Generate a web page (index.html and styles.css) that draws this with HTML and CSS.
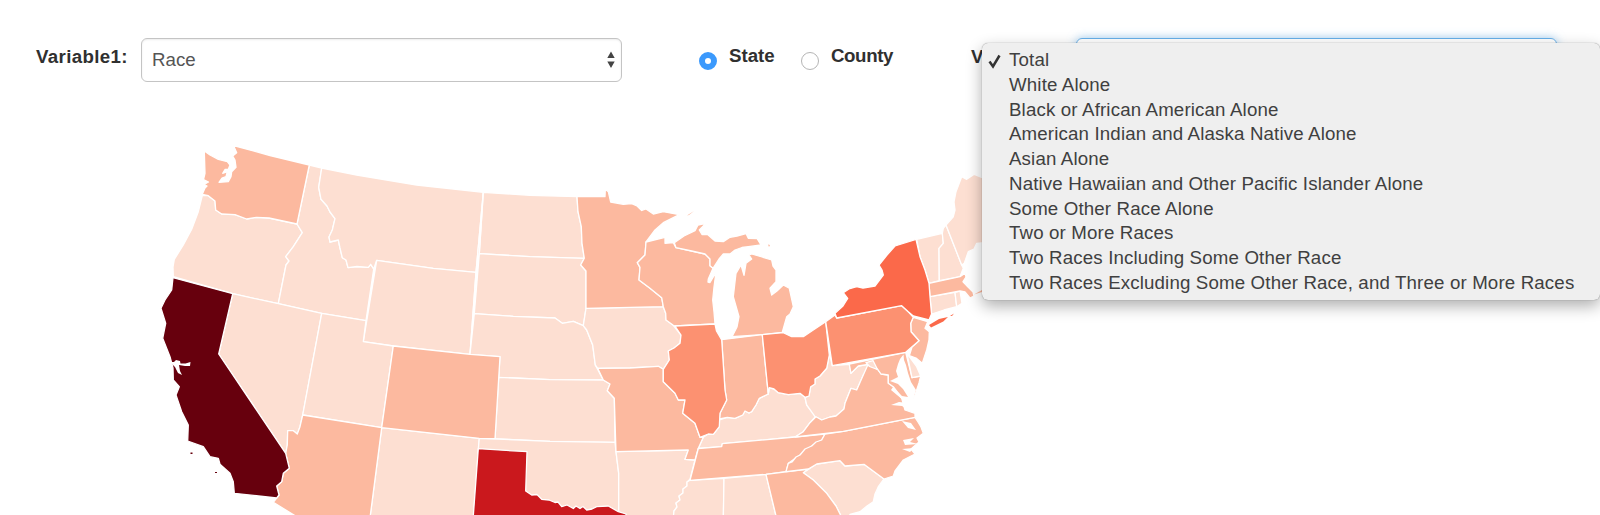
FILE: index.html
```html
<!DOCTYPE html>
<html lang="en">
<head>
<meta charset="utf-8">
<title>Census map</title>
<link rel="stylesheet" href="styles.css">
</head>
<body>
<form class="controls">
  <div class="field first">
    <span class="label">Variable1:</span>
    <div class="select"><span>Race</span>
      <svg class="arrows" width="8" height="18" viewBox="0 0 8 18"><path d="M.3 7L4 .5 7.700 7zM.3 10.500h7.400L4 17z"/></svg>
    </div>
  </div>
  <div class="radios">
    <span class="radio on"></span><span class="label state">State</span>
    <span class="radio"></span><span class="label county">County</span>
  </div>
  <div class="field second">
    <span class="label">V</span>
    <div class="select focus"></div>
  </div>
</form>
<svg class="map" width="1600" height="415" viewBox="0 100 1600 415">
  <g class="c1">
    <path d="M202.300 195.500L208.300 195.700 215 201 215.700 210 221.700 214 235 214.700 246.700 219 256.700 217.300 269 218 297 224 302.300 232.700 293.300 246.700 285.700 256.700 289 261 286 265 278.300 303.700 232.700 293.700 173.300 276.700 173 267 174.300 259.300 183.300 245 191.700 229.300 198.300 211.700z"/>
    <path d="M309.300 165L321.700 168 318.700 187.300 321 199.300 327 206 330 212 335 218.700 332.300 230 329 237 330 242 338.300 240 340 248 342.300 257.700 346 260 348 267.700 357 266.500 368.300 267.300 370.700 264.300 373.700 269 366 320.700 321.700 313.300 278.300 303.700 286 265 289 261 285.700 256.700 293.300 246.700 302.300 232.700 297 224z"/>
    <path d="M321.700 168L356.700 175 416.700 185 483.300 192.300 476 272.300 433.300 268.300 376.700 260.300 373.700 269 370.700 264.300 368.300 267.300 357 266.500 348 267.700 346 260 342.300 257.700 340 248 338.300 240 330 242 329 237 332.300 230 335 218.700 330 212 327 206 321 199.300 318.700 187.300z"/>
    <path d="M376.700 260.300L433.300 268.300 476 272.300 470 354.300 393.300 346 363.300 341.700z"/>
    <path d="M232.700 293.700L278.300 303.700 321.700 313.300 302.700 415 300 426.700 297.300 434 293.300 430.700 287.700 430.700 287.300 445 285.700 453.300 218.700 354z"/>
    <path d="M321.700 313.300L366 320.700 363.300 341.700 393.300 346 381.700 427.700 302.700 415z"/>
    <path d="M381.700 427.700L479.300 438.300 473.300 520 369.700 520z"/>
    <path d="M483.300 192.300L530 195.300 577 196.700 578 211.700 581.300 226.700 582 243.300 584.300 258.300 530 256.700 479.300 253.700z"/>
    <path d="M483.300 192.300L479.300 253.700 476 272.300 474.300 313.700 470 354.300 476 272.300z"/>
    <path d="M479.300 253.700L530 256.700 584.300 258.300 580.700 265 586 271 586 308.300 583.300 325.700 573.300 321.300 562.300 323.300 555 318 513.300 316.300 474.300 313.700z"/>
    <path d="M474.300 313.700L513.300 316.300 555 318 562.300 323.300 573.300 321.300 583.300 325.700 586.700 330 592.700 345 595.300 365 603.300 380 550 379.700 498.700 377.300 500 356.700 470 354.300z"/>
    <path d="M498.700 377.300L550 379.700 603.300 380 610 384 607.300 390.700 614.300 398.300 615 442.300 550 441.300 495 438.700z"/>
    <path d="M479.300 438.300L550 441.300 615 442.300 616 451.700 618.700 473.300 618.700 520 478 520 478.300 448.700z"/>
    <path d="M616 451.700L688.300 450 685 459.300 695 460 690 479.300 687 482 687 486 683 489 683 493 679 496 680 500 676 503 677 507 674 511 673 520 618.700 520 618.700 473.300z"/>
    <path d="M586 308.300L663.300 306.700 665.700 313.300 666 320 673.300 325.300 681 335 680 343.300 674 348 668.300 351 669.300 360 663.300 369.300 658.300 366.300 630 368 597.700 368.300 595.300 365 592.700 345 586.700 330 583.300 325.700z"/>
    <path d="M690 480.300L724 478.300 723.300 520 673 520 674 511 677 507 676 503 680 500 679 496 683 493 683 489 687 486 687 482z"/>
    <path d="M724 478.300L766 474.300 777 520 723.300 520z"/>
    <path d="M703.300 437.300L708.300 434 713.300 434.300 719.300 426.700 719.300 420 727.300 417.300 735 418.300 742.700 415 745 411 749 413 751.700 411.700 756 405 759.300 398.300 768.300 394 769.300 387.700 774 389 778.300 392.700 788.300 394.700 800 393.300 805 397.300 806.700 405 816 416 810 422.700 803.300 431.700 795 437 722.300 443.700 721.700 446.700 698.300 448.500z"/>
    <path d="M828.300 348L832.300 365.700 849.300 364.300 851 373.300 858.300 366 868.300 364.300 868.300 370 863.300 375 856.700 390 851 388.300 845 403.300 844 409 836 416 830 417 821.700 420 815 416.700 806.700 405 805 397.300 809 396 810.700 386.700 815 384 815 379 820 376 826.700 368.300 829.300 355z"/>
    <path d="M803.300 472.700L816.700 464 840 460.700 845 466 864 464.300 884 479 878.300 486.700 875 494 873.300 501.700 867 506 860 511.700 850 514.500 847 520 843 520 836 506 826.700 493.300 813.300 480z"/>
    <path d="M916.700 239.300L942.300 233.300 943.300 243.300 939 248.300 939.300 280.700 929 283.300 925 270 920 256.700z"/>
    <path d="M943.300 228.300L946 225 961.700 265 963.300 268.300 960 276.700 939.300 280.700 939 248.300 943.300 243.300 942.300 233.300z"/>
    <path d="M946 225L953.300 216.700 955 210 954 202 956 191.700 961.700 176.700 966.700 179.300 974.300 174.300 981.700 177.300 990 182 990 238 981.700 243 976.700 243.300 974 249 968.300 251.700 964.300 263.300 961.700 265z"/>
    <path d="M930 296.700L955 292.300 956.700 306.700 944 310 931.700 314z"/>
    <path d="M955 292.300L960 291 962 303.300 956.700 306.700z"/>
  </g>
  <g class="c2">
    <path d="M204.300 151L210 155 218.300 159.300 227.300 161.700 230 165 228.300 169.300 225 169.500 222.700 173.300 227.300 171.700 226 176.700 222 178 219 182.300 228.300 181.700 231 176.700 231.700 171.700 236 167.300 235 160 232.700 156 236.700 152.700 233.500 145.500 270 155.500 309.300 165 297 224 269 218 256.700 217.300 246.700 219 235 214.700 221.700 214 215.700 210 215 201 208.300 195.700 202.300 194.300 205 188 207 186 204 184.500 208.500 182 203.500 179.500 205 173.300z"/>
    <path d="M302.700 415L381.700 427.700 369.700 520 302 520 273.300 502.300 279 495 276.700 486 281.700 481.700 283.300 473.300 289.300 468.300 285.700 453.300 287.300 445 287.700 430.700 293.300 430.700 297.300 434 300 426.700z"/>
    <path d="M393.300 346L470 354.300 500 356.700 495 438.700 479.300 438.300 381.700 427.700z"/>
    <path d="M577 196.700L605 196.700 605.300 189.300 608.300 191.700 610.700 202 623.300 204.300 631.700 203.700 637 206 641.700 210.500 646 209 653.300 214 663.300 211.700 679.300 214.700 663.300 222.700 655 230 646 242 645 255 637.300 262.700 640 267.300 639 280 650 288.300 661.700 297.700 663.300 306.700 586 308.300 586 271 580.700 265 584.300 258.300 582 243.300 581.300 226.700 578 211.700z"/>
    <path d="M646 242L665 237.300 665 243.300 673.300 242.700 676 247.700 691.700 251 705 254 710 259 710 265.700 713 268.300 708.300 279 708 282 710 282.500 714.500 275 716 272 714 287 712.700 300 714 312 715 324 675 326 673.300 325.300 666 320 665.700 313.300 663.300 306.700 661.700 297.700 650 288.300 639 280 640 267.300 637.300 262.700 645 255z"/>
    <path d="M597.700 368.300L630 368 658.300 366.300 663.300 369.300 663.300 381.700 675 393.300 678.300 400 685 400 682.700 413.300 695 423.300 700 437.300 703.300 437.300 698.300 448.300 695 460 685 459.300 688.300 450 616 451.700 614.300 398.300 607.300 390.700 610 384 603.300 380z"/>
    <path d="M674.300 242.700L684 236 695 230.700 698 225 706 223.300 699.300 230 702 234.500 707.300 234.300 715 241 723.300 241.700 730 237.300 737 236 746 233.500 748.300 238.300 757 238.500 761 245 748.300 246.700 742 247.500 735 250 730 254 723.300 254 719 259 713 268.300 710 265.700 710 259 705 254 691.700 251 676 247.700z"/>
    <path class="flat" d="M687 215.500l7-4.500-5 4z M768 244.500l2 .5-1 2z"/>
    <path d="M751.700 254L762 257 771.700 260 773 266 776 270 776 281.700 770 288.300 771.700 295 777 291 783.300 285 789.300 288.300 793.300 306.700 790 314 786.700 316.700 782.300 332.300 762.300 334.700 732 336.700 737 327 739 316.700 733.300 296.700 736 273.300 741 265 744 275.300 746 263.300 751.700 259 749 255z"/>
    <path d="M721.700 339.700L762.300 334.700 768.300 394 759.300 398.300 756 405 751.700 411.700 749 413 745 411 742.700 415 735 418.300 727.300 417.300 719.300 419 720 413.300 726.700 400 725 390z"/>
    <path d="M690 480.300L698.300 448.500 721.700 446.700 722.300 443.700 795 437 825 434 821.700 440 811.700 446 800 455 788.300 463.300 786 471.700 766 474.300z"/>
    <path d="M766 474.300L808.300 469 803.300 472.700 813.300 480 826.700 493.300 836 506 843 520 777 520z"/>
    <path d="M825 434L843.300 431.300 915 417.300 918 422 921 427 923.300 433.300 917 438 919 442 911 449 915 454 903.300 460 895 471 893.300 476 884 479 864 464.300 845 466 840 460.700 816.700 464 808.300 469 786 471.700 788.300 463.300 792 462 796 457 800 455 805 449 811.700 446 816 442 821.700 440z"/>
    <path d="M868 364.500L877.700 369.300 881 374 888.300 375 888.300 383.300 893.300 386.700 901.700 398.300 905 410 915 413.300 915 417.300 843.300 431.300 795 437 803.300 431.700 810 422.700 816 416.700 821.700 420 830 417 836 416 844 409 845 403.300 851 388.300 856.700 390 863.300 375z"/>
    <path d="M849.300 364L905.700 352.300 912 377.700 920.700 376 919 383 915 395 912 401 909 401 901 397 893.300 386.700 888.300 383.300 888.300 375 881 374 877.700 369.300 868.300 364.300 858.300 366 851 373.300z"/>
    <path class="c1" d="M866 362.500l7-2 4.500 9-8-3zM906.700 352.300L912 377.700 920.700 376 916.700 366.700 909.300 356.700z"/>
    <path d="M913.300 317.300L927.700 321.700 925 328.300 929.300 331.700 929 340 926.700 350 922.300 363.300 916 358 909.300 355.700 912 347 919 340.700 911 331.700 910.700 323.300z"/>
    <path d="M929 283.300L960 276.700 965 273.300 966 277 963 281.700 968 287 973 292 974 296 970 298 965 292 960 291 930 296.700z"/>
    <path class="flat" d="M974 294.500l8-4.500v2z"/>
  </g>
  <g class="c3">
    <path d="M675 326L715 324 716.500 331 721.700 340 725 390 726.700 400 720 413.300 719.300 426.700 713.300 434.300 708.300 434 700 437.300 695 423.300 682.700 413.300 685 400 678.300 400 675 393.300 663.300 381.700 663.300 369.300 669.300 360 668.300 351 674 348 680 343.300 681 335z"/>
    <path d="M762.300 334.700L783.300 332.700 791.700 336.700 803.300 336.700 813.300 330 825.700 321.700 829.300 355 826.700 368.300 820 376 815 379 815 384 810.700 386.700 809 396 805 397.300 800 393.300 788.300 394.700 778.300 392.700 774 389 769.300 387.700 768.300 394z"/>
    <path d="M825.700 321.700L835 315 836.700 318 901.700 305.700 908.300 311.700 913.300 317.300 910.700 323.300 911 331.700 919 340.700 905.700 352.300 832.300 365.700z"/>
  </g>
  <path class="c4" d="M836.700 318L835 313.300 843 306 847.700 298.300 843.300 292.700 849 289 856.700 286.700 863 288 875 286 883.300 275 882 270 879 265 887 255 895 246 916 239.300 920 256.700 925 270 929 283.300 930 296.700 931.500 314 929 320 913.300 316 908.300 311.700 901.700 305.700z"/>
  <path class="c4 flat" d="M929 325L939 319 948 317 943.300 321.500 931 327.500zM950 316l4-2.500-2 2.500z"/>
  <path class="c5" d="M478.300 448.700L527 451.700 525.700 491 531.700 495 537 494.500 541.700 499.300 549 500 555 502.500 558 502 561.700 506.700 567 505 573.300 508.500 576 506 580 508.500 583 506.500 586.700 510 592 509 596.700 506.700 608.300 506 618.300 511.700 626 514 626 520 473 520z"/>
  <path class="c6" d="M173 277.700L232.700 293.700 218.700 354 285.700 453.300 289.300 468.300 283.300 473.300 281.700 481.700 276.700 486 279 495 276.700 498 234.300 493.300 233.300 481.700 230 473.300 220 464.300 218.300 458.300 210 456.700 203.300 446.700 187.700 441 188.300 425 181.700 411.700 176 395 179.300 386.700 173.300 380 173 368 170 356.700 162.700 338.300 165.700 323.300 161 308.300 165 300 171.700 290z"/>
  <path class="c6 flat" d="M190.500 452.500h2v1.500h-2zM215 472h2v1h-2z"/>
  <path class="water" d="M170 362l4 0 2-2 4 1 .5 2.500 5 0 5-1.500-.5 4-5 0-6-1 1 6 2 4-4-2-3-6zM903.500 354.500L900 359 898 364 896 371 898 377 890 381 898 384 903 389 908 397 902 396 893 387 891 390 903 400 908 403 899 402 891 405 902 406 908 410 915 413 913 400 916 390 911 382 908 373 906 365 904 360zM902 421l9 2 5 7-8-2zM903 440l11-2-4 4 8 2-13 1zM902 449l12-1-4 4z"/>
</svg>
<ul class="menu">
  <li><svg class="check" width="14" height="16" viewBox="0 0 14 16"><path d="M1.500 8.500L5 13.500 11.500 2.500"/></svg>Total</li>
  <li>White Alone</li>
  <li>Black or African American Alone</li>
  <li>American Indian and Alaska Native Alone</li>
  <li>Asian Alone</li>
  <li>Native Hawaiian and Other Pacific Islander Alone</li>
  <li>Some Other Race Alone</li>
  <li>Two or More Races</li>
  <li>Two Races Including Some Other Race</li>
  <li>Two Races Excluding Some Other Race, and Three or More Races</li>
</ul>
</body>
</html>
```
FILE: styles.css
```css
* { box-sizing: border-box; }
body {
  margin: 0;
  width: 1600px;
  height: 515px;
  overflow: hidden;
  position: relative;
  background: #fff;
  color: #333;
  font: 18.700px/24px "Liberation Sans", Arial, sans-serif;
}
.controls {
  height: 100px;
  padding: 38px 0 0 36px;
  display: flex;
  align-items: flex-start;
}
.field { display: flex; }
.field .label { width: 105px; padding-top: 7px; letter-spacing: .35px; }
.first { width: 663px; }
.second { width: 586px; }
.label { font-weight: bold; color: #303030; }
.select {
  width: 481px;
  height: 44px;
  padding: 9px 6px 0 10px;
  display: flex;
  justify-content: space-between;
  border: 1px solid #c4c4c4;
  border-radius: 6px;
  color: #555;
  box-shadow: inset 0 1px 2px rgba(0, 0, 0, .08);
}
.focus { border-color: #66afe9; box-shadow: 0 0 10px rgba(102, 175, 233, .6); }
.arrows { margin-top: 3px; fill: #444; }
.radios { display: flex; width: 272px; padding-top: 6px; }
.radio {
  width: 18px;
  height: 18px;
  margin: 8px 12px 0 0;
  border: 1px solid #b5b5b5;
  border-radius: 50%;
}
.on { border: 6px solid #3b99fc; }
.state { width: 72px; }
.county { letter-spacing: -.4px; }
.map { display: block; stroke: #fff; stroke-width: 1.300; stroke-linejoin: round; }
.c1 { fill: #fddfd2; }
.c2 { fill: #fcb99f; }
.c3 { fill: #fc9171; }
.c4 { fill: #fb694a; }
.c5 { fill: #ca181d; }
.c6 { fill: #67000d; }
.flat { stroke: none; }
.water { fill: #fff; stroke: none; }
.menu {
  position: absolute;
  left: 982px;
  top: 42.500px;
  width: 618px;
  height: 257.500px;
  margin: 0;
  padding: 5.500px 0 0 27px;
  list-style: none;
  background: #efefef;
  border-radius: 6px;
  box-shadow: 0 0 1px rgba(0, 0, 0, .5), 0 6px 16px rgba(0, 0, 0, .32);
  color: #404040;
  line-height: 24.750px;
  letter-spacing: .15px;
  white-space: nowrap;
}
.menu li { position: relative; }
.check { position: absolute; left: -21px; top: 5px; fill: none; stroke: #333; stroke-width: 2.500; }
```
